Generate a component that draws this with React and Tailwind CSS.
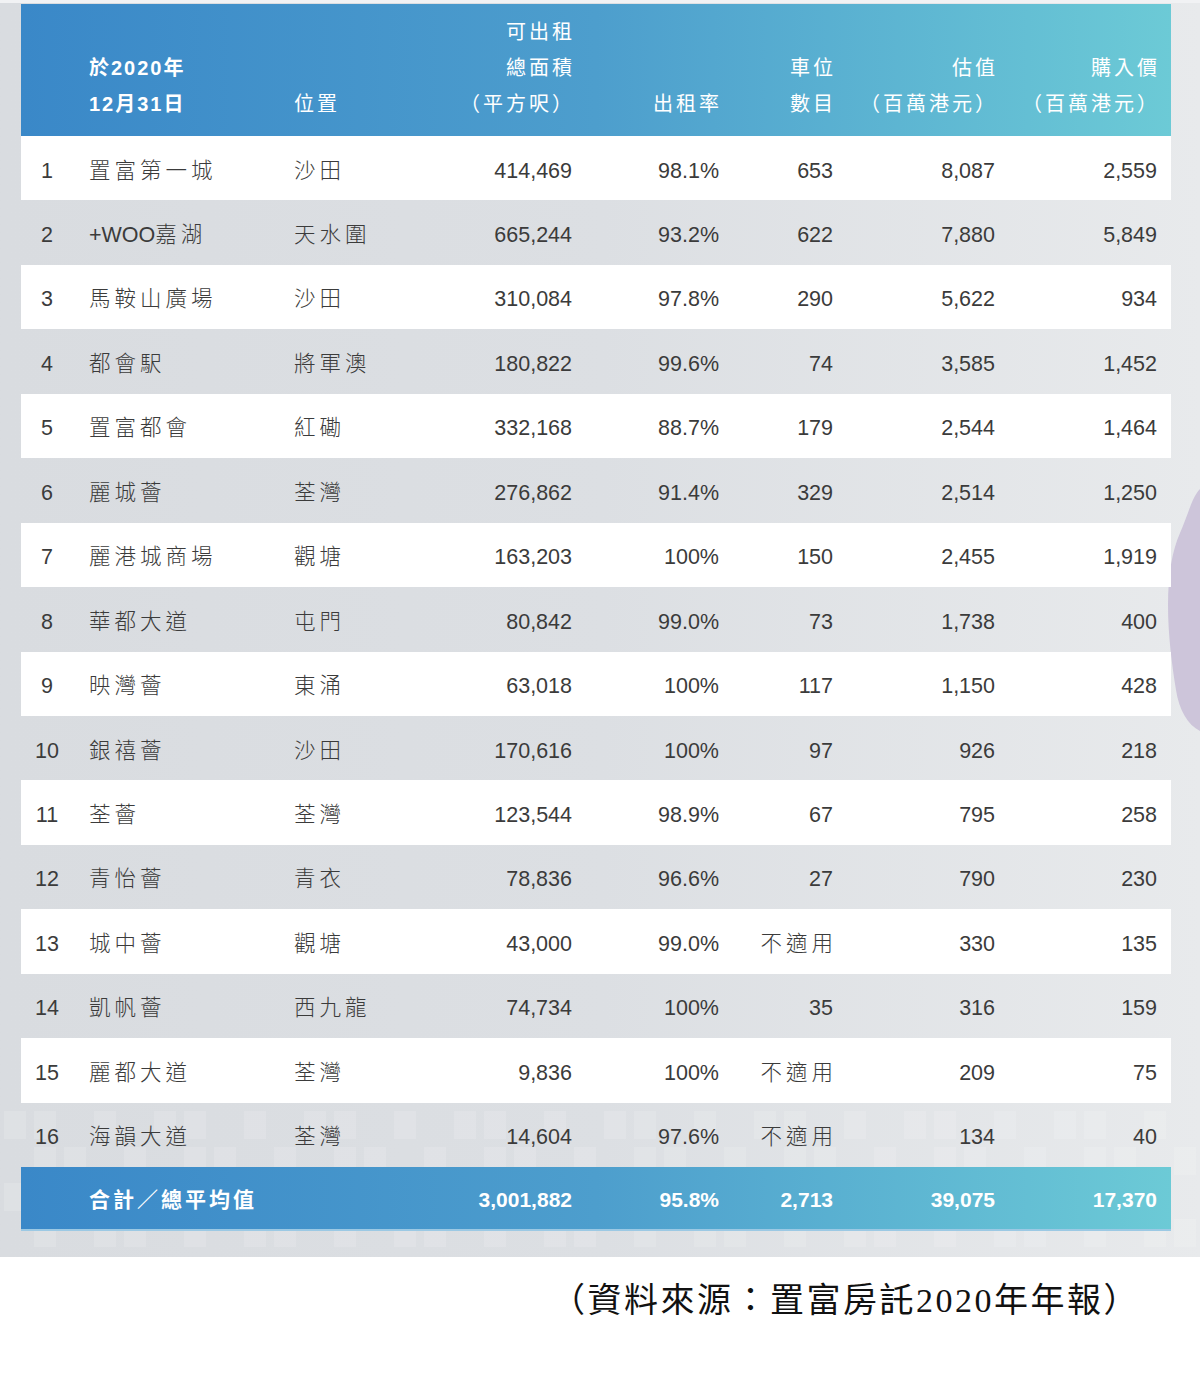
import React from 'react';

const rows = [
  ['1', '置富第一城', '沙田', '414,469', '98.1%', '653', '8,087', '2,559'],
  ['2', '+WOO|嘉湖', '天水圍', '665,244', '93.2%', '622', '7,880', '5,849'],
  ['3', '馬鞍山廣場', '沙田', '310,084', '97.8%', '290', '5,622', '934'],
  ['4', '都會駅', '將軍澳', '180,822', '99.6%', '74', '3,585', '1,452'],
  ['5', '置富都會', '紅磡', '332,168', '88.7%', '179', '2,544', '1,464'],
  ['6', '麗城薈', '荃灣', '276,862', '91.4%', '329', '2,514', '1,250'],
  ['7', '麗港城商場', '觀塘', '163,203', '100%', '150', '2,455', '1,919'],
  ['8', '華都大道', '屯門', '80,842', '99.0%', '73', '1,738', '400'],
  ['9', '映灣薈', '東涌', '63,018', '100%', '117', '1,150', '428'],
  ['10', '銀禧薈', '沙田', '170,616', '100%', '97', '926', '218'],
  ['11', '荃薈', '荃灣', '123,544', '98.9%', '67', '795', '258'],
  ['12', '青怡薈', '青衣', '78,836', '96.6%', '27', '790', '230'],
  ['13', '城中薈', '觀塘', '43,000', '99.0%', '不適用', '330', '135'],
  ['14', '凱帆薈', '西九龍', '74,734', '100%', '35', '316', '159'],
  ['15', '麗都大道', '荃灣', '9,836', '100%', '不適用', '209', '75'],
  ['16', '海韻大道', '荃灣', '14,604', '97.6%', '不適用', '134', '40'],
];

const grid = 'grid w-[1150px] grid-cols-[52px_221px_126px_152px_147px_114px_162px_162px_14px]';
const cjk = "font-['Liberation_Sans','Noto_Sans_CJK_TC',sans-serif]";

function Cell({ value, right }) {
  const isCjk = /[\u4e00-\u9fff]/.test(value);
  if (value.includes('|')) {
    const [latin, han] = value.split('|');
    return (
      <div>
        <span>{latin}</span>
        <span className="tracking-[4px] font-light">{han}</span>
      </div>
    );
  }
  return (
    <div className={right ? 'text-right' : ''}>
      <span className={isCjk ? 'mr-[-4px] tracking-[4px] font-light' : ''}>{value}</span>
    </div>
  );
}

function HeaderCol({ lines, right, bold }) {
  return (
    <div className={`flex flex-col ${right ? 'items-end' : 'items-start'} ${bold ? 'pl-[16px]' : ''}`}>
      {lines.map((line) => (
        <span
          key={line}
          className={`h-[36px] leading-[36px] ${bold ? 'font-bold tracking-[2px]' : 'tracking-[3px] mr-[-3px]'}`}
        >
          {line}
        </span>
      ))}
    </div>
  );
}

export default function App() {
  return (
    <div className={`w-[1200px] bg-white ${cjk}`}>
      <div className="h-[3px] bg-[#f1f2f4]" />
      <div className="relative overflow-hidden bg-gradient-to-r from-[#d9dce0] via-[#dcdfe3] to-[#e8eaec] px-[21px] pb-[26px] pt-[1px]">
        <svg className="absolute bottom-0 left-0" width="1200" height="160" viewBox="0 0 1200 160">
          {Array.from({ length: 40 }).map((_, i) =>
            Array.from({ length: 4 }).map((__, j) =>
              (i * 7 + j * 3) % 5 < 3 ? (
                <rect
                  key={`${i}-${j}`}
                  x={i * 30 + 4}
                  y={j * 36 + 14}
                  width="22"
                  height="28"
                  fill="#ffffff"
                  opacity="0.14"
                />
              ) : null
            )
          )}
        </svg>
        <svg className="absolute right-0 top-[482px]" width="34" height="250" viewBox="0 0 34 250">
          <path d="M34 4 C26 12 22 30 14 48 C6 66 2 90 2 120 C2 150 6 180 10 205 C13 225 22 240 34 246 Z" fill="#cdc5da" />
        </svg>

        <div className="relative w-[1150px]">
          <div className={`${grid} h-[132px] items-end bg-gradient-to-r from-[#3a88c8] via-[#4d9ecd] to-[#6ccad6] pb-[14px] text-[20px] text-white`}>
            <div />
            <HeaderCol lines={['於2020年', '12月31日']} bold />
            <HeaderCol lines={['位置']} />
            <HeaderCol lines={['可出租', '總面積', '（平方呎）']} right />
            <HeaderCol lines={['出租率']} right />
            <HeaderCol lines={['車位', '數目']} right />
            <HeaderCol lines={['估值', '（百萬港元）']} right />
            <HeaderCol lines={['購入價', '（百萬港元）']} right />
            <div />
          </div>

          {rows.map((row, i) => (
            <div
              key={row[0]}
              className={`${grid} h-[64.45px] items-center pt-[5px] text-[21.5px] text-[#3b3b3b] ${i % 2 === 0 ? 'bg-white' : ''}`}
            >
              <div className="text-center">{row[0]}</div>
              <div className="pl-[16px]">
                <Cell value={row[1]} />
              </div>
              <Cell value={row[2]} />
              <Cell value={row[3]} right />
              <Cell value={row[4]} right />
              <Cell value={row[5]} right />
              <Cell value={row[6]} right />
              <Cell value={row[7]} right />
              <div />
            </div>
          ))}

          <div className={`${grid} h-[64px] items-center border-b-2 border-[#9cc9e4] bg-gradient-to-r from-[#3a88c8] via-[#4d9ecd] to-[#6ccad6] pt-[3px] text-[21px] font-bold text-white`}>
            <div />
            <div className="col-span-2 pl-[16px]">
              <span className="tracking-[3px]">合計／總平均值</span>
            </div>
            <div className="text-right">3,001,882</div>
            <div className="text-right">95.8%</div>
            <div className="text-right">2,713</div>
            <div className="text-right">39,075</div>
            <div className="text-right">17,370</div>
            <div />
          </div>
        </div>
      </div>

      <div className="flex h-[116px] justify-end pr-[60px] pt-[24px]">
        <p className="font-['Liberation_Serif','Noto_Sans_CJK_TC',serif] text-[34px] leading-[40px] tracking-[2.5px] text-[#111]">
          （資料來源：置富房託2020年年報）
        </p>
      </div>
    </div>
  );
}
